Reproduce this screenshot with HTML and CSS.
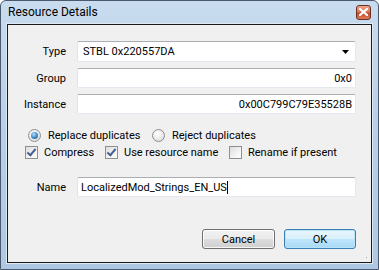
FILE: index.html
```html
<!DOCTYPE html>
<html lang="en">
<head>
    <meta charset="UTF-8">
    <title>Resource Details</title>
    <link rel="stylesheet" href="styles.css">
</head>
<body>
    <div class="window">
        <!-- Title bar -->
        <div class="titlebar">
            <span class="title">Resource Details</span>
            <span class="close">
                <svg width="9" height="8" viewBox="0 0 9 8">
                    <path d="M1 1 L8 7 M8 1 L1 7" stroke="#fff" stroke-width="2.2" stroke-linecap="square"/>
                </svg>
            </span>
        </div>

        <div class="client">
            <!-- Type / Group / Instance -->
            <div class="form">
                <label class="lbl">Type</label>
                <div class="combo">
                    <span>STBL 0x220557DA</span>
                    <svg width="7" height="4" viewBox="0 0 7 4"><path d="M0 0 H7 L3.5 4 Z" fill="#000"/></svg>
                </div>
                <label class="lbl">Group</label>
                <div class="field right">0x0</div>
                <label class="lbl">Instance</label>
                <div class="field right">0x00C799C79E35528B</div>
            </div>

            <!-- Duplicates -->
            <div class="opt-row radios">
                <span class="opt first"><span class="radio on"></span>Replace duplicates</span>
                <span class="opt"><span class="radio"></span>Reject duplicates</span>
            </div>

            <!-- Flags -->
            <div class="opt-row checks">
                <span class="opt c1"><span class="check on"></span>Compress</span>
                <span class="opt c2"><span class="check on"></span>Use resource name</span>
                <span class="opt"><span class="check"></span>Rename if present</span>
            </div>

            <!-- Name -->
            <div class="form name-row">
                <label class="lbl">Name</label>
                <div class="field">LocalizedMod_Strings_EN_US<span class="caret"></span></div>
            </div>

            <div class="buttons">
                <button class="btn cancel">Cancel</button>
                <button class="btn ok">OK</button>
            </div>

            <span class="grip"></span>
        </div>
    </div>
</body>
</html>
```

FILE: styles.css
```css
body {
    margin: 0;
    padding: 0;
    font-family: Roboto, "Open Sans", sans-serif;
    font-size: 11px;
    color: #000;
    background: #fff;
}
.window {
    width: 379px;
    height: 270px;
    box-sizing: border-box;
    border: 1px solid #4a5a6c;
    border-radius: 6px 6px 0 0;
    background: linear-gradient(to bottom, #c9dcef 0%, #b9d1ea 40%, #aec8e4 100%);
    display: flex;
    flex-direction: column;
    padding: 0 6px 6px 6px;
}
.titlebar {
    height: 23px;
    display: flex;
    align-items: center;
    justify-content: space-between;
}
.title {
    font-size: 12px;
    padding-left: 1px;
    margin-top: -1px;
    color: #000;
}
.close {
    width: 15px;
    height: 15px;
    box-sizing: border-box;
    margin-top: -1px;
    margin-right: 1px;
    border: 1px solid #6b3026;
    border-radius: 3px;
    background: linear-gradient(to bottom, #eaa58c 0%, #d9775a 45%, #c44a2a 55%, #dc7a58 100%);
    display: flex;
    align-items: center;
    justify-content: center;
}
.client {
    position: relative;
    flex: 1;
    border: 1px solid #1b1b1b;
    box-shadow: 0 0 0 1px #dfe9f4;
    background: #f0f0f0;
    padding: 16px 15px 0 0;
}
.form {
    display: grid;
    grid-template-columns: 58px 279px;
    column-gap: 11px;
    row-gap: 6px;
    align-items: center;
}
.lbl {
    text-align: right;
}
.field, .combo {
    height: 20px;
    box-sizing: border-box;
    background: #fff;
    border: 1px solid #e3e9ef;
    border-top-color: #abadb3;
    border-left-color: #e2e3ea;
    border-radius: 2px;
    display: flex;
    align-items: center;
    padding: 0 3px;
    white-space: nowrap;
}
.combo {
    height: 21px;
    justify-content: space-between;
    padding: 0 6px 0 5px;
}
.field.right {
    justify-content: flex-end;
}
.caret {
    display: inline-block;
    width: 1px;
    height: 13px;
    background: #000;
}
.opt-row {
    display: flex;
    align-items: center;
    height: 14px;
}
.radios {
    margin-top: 14px;
    padding-left: 20px;
}
.checks {
    margin-top: 3px;
    padding-left: 17px;
}
.opt {
    display: flex;
    align-items: center;
    gap: 7px;
    white-space: nowrap;
}
.radios .first { width: 124px; }
.checks .opt { gap: 6px; }
.checks .c1 { width: 80px; }
.checks .c2 { width: 124px; }
.radio {
    width: 13px;
    height: 13px;
    box-sizing: border-box;
    border-radius: 50%;
    border: 1px solid #8e8f8f;
    background: radial-gradient(circle at 40% 35%, #fff 0%, #e6e6e6 60%, #d4d4d4 100%);
    position: relative;
}
.radio.on::after {
    content: "";
    position: absolute;
    left: 2px;
    top: 2px;
    width: 7px;
    height: 7px;
    border-radius: 50%;
    background: radial-gradient(circle at 40% 35%, #b6dcf8 0%, #3a86c8 55%, #1d4f8c 100%);
}
.check {
    width: 13px;
    height: 13px;
    box-sizing: border-box;
    border: 1px solid #8e8f8f;
    background: linear-gradient(135deg, #dcdcdc 0%, #f4f4f4 60%, #fff 100%);
    position: relative;
}
.check.on::after {
    content: "";
    position: absolute;
    left: 3px;
    top: 0px;
    width: 3px;
    height: 7px;
    border: solid #4a5f8e;
    border-width: 0 2px 2px 0;
    transform: rotate(40deg);
}
.name-row {
    margin-top: 18px;
}
.buttons {
    display: flex;
    justify-content: flex-end;
    gap: 9px;
    margin-top: 32px;
    padding-right: 0;
}
.btn {
    height: 20px;
    box-sizing: border-box;
    font-family: inherit;
    font-size: 11px;
    padding: 0;
    border: 1px solid #707070;
    border-radius: 3px;
    background: linear-gradient(to bottom, #f2f2f2 0%, #ebebeb 48%, #dddddd 52%, #cfcfcf 100%);
    box-shadow: inset 0 0 0 1px rgba(255, 255, 255, 0.8);
}
.cancel { width: 73px; }
.ok {
    width: 72px;
    border-color: #3c7fb1;
    box-shadow: inset 0 0 0 1px #b7e3f9;
    background: linear-gradient(to bottom, #eaf6fd 0%, #d9f0fc 48%, #bee6fd 52%, #a7d9f5 100%);
}
.grip {
    position: absolute;
    right: 2px;
    bottom: 2px;
    width: 7px;
    height: 7px;
    background:
        radial-gradient(circle, #a0a0a0 0.7px, transparent 1px) 0 0 / 3px 3px;
    clip-path: polygon(100% 0, 100% 100%, 0 100%);
}
```
